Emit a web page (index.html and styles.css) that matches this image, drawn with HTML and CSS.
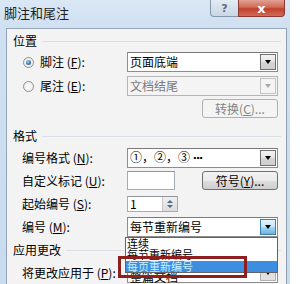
FILE: index.html
```html
<!DOCTYPE html>
<html>
<head>
<meta charset="utf-8">
<link rel="stylesheet" href="styles.css">
</head>
<body>
<div class="window">
  <div class="titlebar">
    <span class="title">脚注和尾注</span>
    <div class="caption-btns">
      <span class="btn-help">?</span>
      <span class="btn-close">x</span>
    </div>
  </div>
  <div class="client">
    <div class="group-head h1"><span>位置</span></div>
    <div class="row r1">
      <label class="lbl radio-lbl"><span class="radio on"></span>脚注 (<u>F</u>):</label>
      <div class="select"><span class="val">页面底端</span><span class="dd"><i></i></span></div>
    </div>
    <div class="row r2">
      <label class="lbl radio-lbl"><span class="radio"></span>尾注 (<u>E</u>):</label>
      <div class="select disabled"><span class="val">文档结尾</span><span class="dd"><i></i></span></div>
    </div>
    <div class="row r-btn">
      <span class="button disabled">转换(<u>C</u>)...</span>
    </div>
    <div class="group-head h2"><span>格式</span></div>
    <div class="row r3">
      <label class="lbl">编号格式 (<u>N</u>):</label>
      <div class="select"><span class="val">①，②，③ <span class="ell">···</span></span><span class="dd"><i></i></span></div>
    </div>
    <div class="row r4">
      <label class="lbl">自定义标记 (<u>U</u>):</label>
      <span class="input short"></span>
      <span class="button sym">符号(<u>Y</u>)...</span>
    </div>
    <div class="row r5">
      <label class="lbl">起始编号 (<u>S</u>):</label>
      <span class="input spin"><span class="val">1</span><span class="spinner"><i class="up"></i><i class="down"></i></span></span>
    </div>
    <div class="row r6">
      <label class="lbl">编号 (<u>M</u>):</label>
      <div class="select focus"><span class="val">每节重新编号</span><span class="dd"><i></i></span>
        <div class="droplist">
          <div class="item">连续</div>
          <div class="item">每节重新编号</div>
          <div class="item sel">每页重新编号</div>
        </div>
      </div>
    </div>
    <div class="group-head h3"><span>应用更改</span></div>
    <div class="row r7">
      <label class="lbl">将更改应用于 (<u>P</u>):</label>
      <div class="select"><span class="val">整篇文档</span><span class="dd"><i></i></span></div>
    </div>
  </div>
  <div class="redbox"></div>
</div>
</body>
</html>
```

FILE: styles.css
```css
* { box-sizing: border-box; }
html, body {
  margin: 0;
  padding: 0;
  background: #ffffff;
  width: 300px;
  height: 284px;
  overflow: hidden;
}
body {
  font-family: "Noto Sans CJK SC", "Noto Sans", sans-serif;
  font-size: 12px;
  color: #000;
}
u { text-decoration: underline; text-underline-offset: 1px; }

.window {
  position: relative;
  width: 290px;
  height: 284px;
  overflow: hidden;
  background: linear-gradient(180deg, #dae7f5 0px, #cfe0f2 28px, #c9dbef 100%);
  padding: 0 3px 0 6px;
}
.titlebar {
  height: 28px;
  display: flex;
  align-items: flex-start;
}
.title {
  font-size: 13px;
  line-height: 14px;
  margin-top: 6px;
  margin-left: -2px;
  color: #1e1e1e;
}
.caption-btns {
  display: flex;
  margin-left: auto;
  margin-right: 2px;
}
.btn-help, .btn-close {
  height: 17px;
  display: flex;
  align-items: center;
  justify-content: center;
  font-family: "DejaVu Sans", sans-serif;
  line-height: 1;
}
.btn-help {
  width: 28px;
  border: 1px solid #8797ab;
  border-top: none;
  border-right: none;
  border-bottom-left-radius: 4px;
  background: linear-gradient(180deg, #e3ebf4, #c9d6e5);
  color: #5e6c80;
  font-size: 11px;
  font-weight: bold;
}
.btn-close {
  width: 47px;
  border: 1px solid #8b3a32;
  border-top: none;
  border-bottom-right-radius: 4px;
  background: linear-gradient(180deg, #e2a093 0%, #d06a56 45%, #c0402b 55%, #d36b58 100%);
  color: #ffffff;
  font-size: 13px;
  font-weight: bold;
}

.client {
  background: #f3f3f3;
  border: 1px solid #95a4b6;
  border-right-color: #8d9db0;
  height: 272px;
  padding: 5px 8px 0 6px;
}

.group-head {
  display: flex;
  align-items: center;
  gap: 5px;
  height: 14px;
  line-height: 14px;
}
.group-head::after {
  content: "";
  flex: 1;
  border-top: 1px solid #d9dfe4;
  margin-right: -3px;
}
.h2 { margin-top: 11px; }
.h3 { margin-top: 6px; }

.row {
  display: flex;
  align-items: center;
}
.r1 { margin-top: 4px; height: 20px; }
.r2 { margin-top: 4px; height: 20px; }
.r-btn { margin-top: 3px; height: 19px; justify-content: flex-end; }
.r3 { margin-top: 5px; height: 20px; }
.r4 { margin-top: 3px; height: 19px; }
.r5 { margin-top: 6px; height: 16px; }
.r6 { margin-top: 5px; height: 20px; }
.r7 { margin-top: 6px; height: 20px; }

.lbl {
  width: 114px;
  padding-left: 9px;
  line-height: 14px;
  display: flex;
  align-items: center;
  white-space: nowrap;
}
.radio-lbl { padding-left: 10px; }
.radio {
  width: 11px;
  height: 11px;
  border-radius: 50%;
  border: 1px solid #8e8f8f;
  background: radial-gradient(circle, #ffffff 0%, #e6e6e6 100%);
  margin-right: 6px;
  position: relative;
}
.radio.on::after {
  content: "";
  position: absolute;
  left: 2px;
  top: 2px;
  width: 5px;
  height: 5px;
  border-radius: 50%;
  background: radial-gradient(circle at 40% 35%, #a6d2f3 0%, #2d71ad 60%, #1c4f86 100%);
}

.select {
  position: relative;
  width: 151px;
  height: 100%;
  background: #ffffff;
  border: 1px solid #8d8d8d;
  border-top-color: #7a7a7a;
  display: flex;
  align-items: center;
}
.select .val {
  padding-left: 2px;
  line-height: 14px;
  flex: 1;
  white-space: nowrap;
}
.ell {
  font-family: "DejaVu Sans", sans-serif;
  font-weight: bold;
  letter-spacing: -1px;
  font-size: 11px;
}
.select .dd {
  width: 16px;
  height: calc(100% - 2px);
  margin-right: 1px;
  border: 1px solid #707070;
  background: linear-gradient(180deg, #f2f2f2 0%, #e5e5e5 50%, #d4d4d4 51%, #cfcfcf 100%);
  display: flex;
  align-items: center;
  justify-content: center;
}
.select .dd i {
  width: 0;
  height: 0;
  border-left: 3.5px solid transparent;
  border-right: 3.5px solid transparent;
  border-top: 4px solid #000;
}
.select.disabled {
  background: #f4f4f4;
  border-color: #b5b5b5;
}
.select.disabled .val { color: #7a7a7a; }
.select.disabled .dd {
  background: #f4f4f4;
  border-color: #c4c4c4;
}
.select.disabled .dd i { border-top-color: #a8a8a8; }
.select.focus .dd {
  border-color: #3c7fb1;
  background: linear-gradient(180deg, #e3f3fc 0%, #c7e5f7 50%, #a9d8f3 51%, #6cb2dc 100%);
}
.r7 .select .dd {
  background: #e1e1e1;
  border-color: #b0b0b0;
}
.r7 .select .val { padding-top: 8px; }

.button {
  width: 76px;
  height: 19px;
  border-radius: 3px;
  display: flex;
  align-items: center;
  justify-content: center;
  line-height: 14px;
  white-space: nowrap;
}
.button.disabled {
  border: 1px solid #adb2b5;
  background: #f4f4f4;
  color: #838383;
}
.button.sym {
  margin-left: auto;
  border: 1px solid #707070;
  background: linear-gradient(180deg, #f2f2f2 0%, #ebebeb 50%, #dddddd 51%, #cfcfcf 100%);
}

.input {
  background: #fff;
  border: 1px solid #a5acb5;
  border-top-color: #8e959e;
  height: 100%;
}
.input.short { width: 48px; }
.input.spin {
  width: 51px;
  display: flex;
  align-items: center;
}
.input.spin .val {
  flex: 1;
  padding-left: 2px;
  line-height: 14px;
}
.spinner {
  width: 15px;
  height: 100%;
  border-left: 1px solid #c9c9c9;
  background: linear-gradient(180deg, #f1f1f1, #dcdcdc);
  display: flex;
  flex-direction: column;
  align-items: center;
  justify-content: center;
  gap: 2px;
}
.spinner i {
  width: 0;
  height: 0;
  border-left: 3px solid transparent;
  border-right: 3px solid transparent;
}
.spinner .up { border-bottom: 3px solid #4d6a8a; }
.spinner .down { border-top: 3px solid #4d6a8a; }

.droplist {
  position: absolute;
  left: -3px;
  top: 19px;
  width: 153px;
  height: 36px;
  background: #ffffff;
  border: 1px solid #646464;
  z-index: 2;
}
.droplist .item {
  height: 11px;
  line-height: 11px;
  font-size: 11px;
  padding-left: 1px;
  white-space: nowrap;
}
.droplist .item.sel {
  background: #3d8ee0;
  color: #c9f0ff;
  margin-top: 1px;
}

.redbox {
  position: absolute;
  left: 118px;
  top: 256px;
  width: 129px;
  height: 22px;
  border: 3px solid #8e1f1f;
  z-index: 5;
}
```
